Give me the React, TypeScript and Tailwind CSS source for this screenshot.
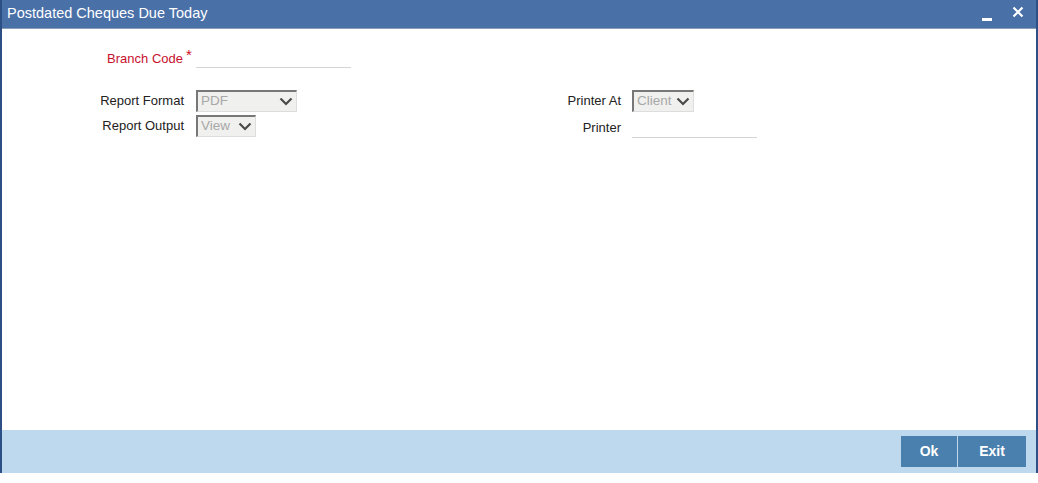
import React from 'react';

const font = { fontFamily: '"Liberation Sans", Arial, sans-serif' };

const Chevron: React.FC = () => (
  <svg width="14" height="9" viewBox="0 0 14 9" className="shrink-0">
    <path d="M1.5 1.5 L7 7 L12.5 1.5" fill="none" stroke="#4a4a4a" strokeWidth="2.2" />
  </svg>
);

const FakeSelect: React.FC<{ value: string; width: string }> = ({ value, width }) => (
  <div
    className={`${width} h-[22px] flex items-center justify-between bg-[#f0f0ee] border-t-2 border-l-2 border-t-[#777] border-l-[#777] border-r border-b border-r-[#ddd] border-b-[#ddd] pl-[3px] pr-[3px] text-[13.5px] text-[#a8a8a8]`}
  >
    <span>{value}</span>
    <Chevron />
  </div>
);

export default function App(): JSX.Element {
  return (
    <div className="w-[1038px] h-[483px] bg-white" style={font}>
      <div className="h-[473px] flex flex-col border-l-2 border-r-2 border-[#2c4f86]">
        {/* title bar */}
        <div className="h-[29px] bg-[#4a70a8] border-b border-[#8a9fb5] flex items-center justify-between pl-[5px] pr-[12px] shrink-0">
          <span className="text-white text-[14.5px]">Postdated Cheques Due Today</span>
          <div className="flex items-center gap-[20px] pt-[2px]">
            <div className="w-[10px] h-[3px] bg-white mt-[8px]" />
            <svg width="12" height="12" viewBox="0 0 12 12" className="mb-[6px]">
              <path d="M1.5 1.5 L10.5 10.5 M10.5 1.5 L1.5 10.5" stroke="white" strokeWidth="2.2" />
            </svg>
          </div>
        </div>

        {/* body */}
        <div className="flex-1 text-[13px] text-[#222]">
          <div className="flex items-end mt-[16px]">
            <div className="w-[190px] flex justify-end items-start">
              <span className="text-[#c8102e]">Branch Code</span>
              <span className="w-[6px] text-[#d0101e] text-[15px] leading-none ml-[3px] -mt-[2px]">*</span>
            </div>
            <div className="w-[155px] h-[23px] border-b border-[#d4d4d4] ml-[4px]" />
          </div>

          <div className="flex mt-[22px]">
            <div className="w-[563px] flex flex-col gap-[3px]">
              <div className="flex items-center">
                <div className="w-[182px] text-right">Report Format</div>
                <div className="ml-[12px]">
                  <FakeSelect value="PDF" width="w-[101px]" />
                </div>
              </div>
              <div className="flex items-center">
                <div className="w-[182px] text-right">Report Output</div>
                <div className="ml-[12px]">
                  <FakeSelect value="View" width="w-[60px]" />
                </div>
              </div>
            </div>
            <div className="flex flex-col gap-[3px]">
              <div className="flex items-center">
                <div className="w-[56px] text-right">Printer At</div>
                <div className="ml-[11px]">
                  <FakeSelect value="Client" width="w-[62px]" />
                </div>
              </div>
              <div className="flex items-start">
                <div className="w-[56px] text-right pt-[3px]">Printer</div>
                <div className="w-[125px] h-[23px] border-b border-[#d4d4d4] ml-[11px]" />
              </div>
            </div>
          </div>
        </div>

        {/* footer */}
        <div className="h-[43px] bg-[#bed9ed] flex items-center justify-end pr-[10px] shrink-0">
          <button className="w-[57px] h-[31px] bg-[#4a80ae] text-white text-[14px] font-bold border-r border-[#bed9ed]">
            Ok
          </button>
          <button className="w-[68px] h-[31px] bg-[#4a80ae] text-white text-[14px] font-bold">
            Exit
          </button>
        </div>
      </div>
    </div>
  );
}
